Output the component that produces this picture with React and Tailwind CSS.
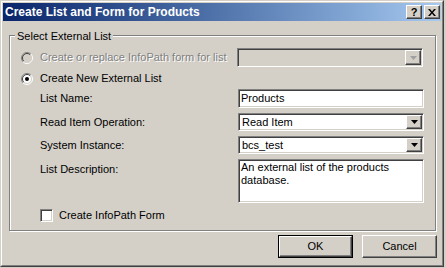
import React from "react";

// Win2000 classic colours
const FACE = "bg-[#d4d0c8]";
const SUNKEN =
  "border border-t-[#808080] border-l-[#808080] border-b-white border-r-white shadow-[inset_1px_1px_0_#404040,inset_-1px_-1px_0_#d4d0c8]";
const RAISED =
  "border border-t-white border-l-white border-b-[#404040] border-r-[#404040] shadow-[inset_-1px_-1px_0_#808080]";
const DISABLED_TEXT = "text-[#808080] [text-shadow:1px_1px_0_#fff]";

function Radio({ checked, disabled }) {
  return (
    <svg width="12" height="12" viewBox="0 0 12 12" className="shrink-0">
      <circle cx="6" cy="6" r="5" fill={disabled ? "#d4d0c8" : "#fff"} />
      <path d="M2.1 9.9 A5.5 5.5 0 0 1 9.9 2.1" stroke="#808080" fill="none" />
      <path d="M2.8 9.2 A4.5 4.5 0 0 1 9.2 2.8" stroke="#404040" fill="none" />
      <path d="M9.9 2.1 A5.5 5.5 0 0 1 2.1 9.9" stroke="#fff" fill="none" />
      <path d="M9.2 2.8 A4.5 4.5 0 0 1 2.8 9.2" stroke="#d4d0c8" fill="none" />
      {checked && <circle cx="6" cy="6" r="2" fill="#000" />}
    </svg>
  );
}

function DropButton({ disabled }) {
  return (
    <div className={`w-[16px] h-full ${FACE} ${RAISED} flex items-center justify-center shrink-0`}>
      <svg width="7" height="4" viewBox="0 0 7 4">
        <path d="M0 0h7L3.5 4z" fill={disabled ? "#a0a0a0" : "#000"} />
      </svg>
    </div>
  );
}

function Select({ value, disabled, h }) {
  return (
    <div className={`w-[186px] ${h} ${SUNKEN} ${disabled ? FACE : "bg-white"} flex p-[1px]`}>
      <div className="flex-1 pl-[2px] flex items-center leading-none">{value}</div>
      <DropButton disabled={disabled} />
    </div>
  );
}

function Row({ label, children, top }) {
  return (
    <div className={`flex ${top ? "items-start" : "items-center"} pl-[30px]`}>
      <div className={`w-[198px] ${top ? "pt-[2px]" : ""}`}>{label}</div>
      {children}
    </div>
  );
}

export default function App() {
  return (
    <div className={`w-[446px] h-[268px] ${FACE} font-['Liberation_Sans',Arial,sans-serif] text-[11px] text-black`}>
      <div className="w-[444px] h-[267px] border border-t-[#d4d0c8] border-l-[#d4d0c8] border-b-[#404040] border-r-[#404040]">
        <div className="h-full border border-t-white border-l-white border-b-[#808080] border-r-[#808080] p-px flex flex-col">
          {/* Title bar */}
          <div className="h-[18px] flex items-center bg-gradient-to-r from-[#0a246a] to-[#a6caf0] pl-[2px] pr-[1px]">
            <span className="flex-1 text-white font-bold text-[12px]">Create List and Form for Products</span>
            <div className={`w-[16px] h-[14px] ${FACE} ${RAISED} flex items-center justify-center font-bold text-[11px] leading-none`}>?</div>
            <div className={`w-[16px] h-[14px] ml-[2px] ${FACE} ${RAISED} flex items-center justify-center`}>
              <svg width="8" height="7" viewBox="0 0 8 7">
                <path d="M0 0h2l2 2.5L6 0h2L5 3.5 8 7H6L4 4.5 2 7H0l3-3.5z" fill="#000" />
              </svg>
            </div>
          </div>

          {/* Group box */}
          <div className="relative ml-[6px] mt-[14px] w-[427px] h-[196px] border border-[#808080] shadow-[1px_1px_0_#fff,inset_1px_1px_0_#fff] flex flex-col">
            <span className={`absolute -top-[8px] left-[5px] px-[2px] ${FACE}`}>Select External List</span>

            <div className="flex items-center mt-[12px] pl-[11px]">
              <Radio disabled />
              <span className={`ml-[7px] w-[197px] ${DISABLED_TEXT}`}>Create or replace InfoPath form for list</span>
              <Select disabled h="h-[19px]" />
            </div>

            <div className="flex items-center mt-[5px] h-[13px] pl-[11px]">
              <Radio checked />
              <span className="ml-[7px]">Create New External List</span>
            </div>

            <div className="flex flex-col gap-[5px] mt-[4px]">
              <Row label="List Name:">
                <div className={`w-[186px] h-[19px] ${SUNKEN} bg-white pl-[2px] flex items-center`}>Products</div>
              </Row>
              <Row label="Read Item Operation:">
                <Select value="Read Item" h="h-[18px]" />
              </Row>
              <Row label="System Instance:">
                <Select value="bcs_test" h="h-[18px]" />
              </Row>
              <Row label="List Description:" top>
                <div className={`w-[186px] h-[44px] ${SUNKEN} bg-white pl-[2px] pr-[4px] pt-[1px] leading-[13px]`}>
                  An external list of the products database.
                </div>
              </Row>
            </div>

            <div className="flex items-center mt-[4px] pl-[30px]">
              <div className={`w-[13px] h-[13px] ${SUNKEN} bg-white`} />
              <span className="ml-[6px]">Create InfoPath Form</span>
            </div>
          </div>

          {/* Buttons */}
          <div className="flex justify-end gap-[9px] mt-[4px] mr-[4px]">
            <div className="w-[75px] h-[23px] border border-black">
              <div className={`h-full ${FACE} ${RAISED} flex items-center justify-center`}>OK</div>
            </div>
            <div className={`w-[75px] h-[23px] ${FACE} ${RAISED} flex items-center justify-center`}>Cancel</div>
          </div>
        </div>
      </div>
    </div>
  );
}
